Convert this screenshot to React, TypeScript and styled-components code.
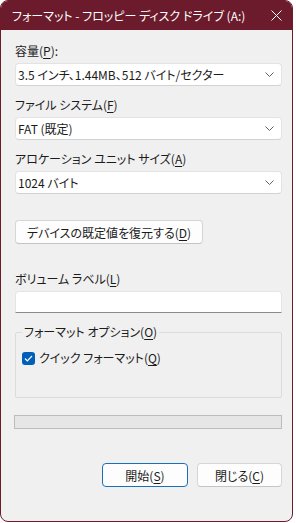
import React from 'react';
import styled, { createGlobalStyle } from 'styled-components';

const GlobalStyle = createGlobalStyle`
  html, body {
    margin: 0;
    background: #ffffff;
  }
  body {
    font-family: "Noto Sans CJK JP", "Noto Sans", sans-serif;
    font-feature-settings: "palt";
    font-size: 12px;
    color: #1b1b1b;
  }
`;

const maroon = '#6b1b2b';

const Window = styled.div`
  width: 293px;
  height: 522px;
  box-sizing: border-box;
  border: 1px solid ${maroon};
  border-radius: 8px;
  overflow: hidden;
  background: #f0f0f0;
  display: flex;
  flex-direction: column;
`;

const TitleBar = styled.div`
  height: 29px;
  flex-shrink: 0;
  background: ${maroon};
  color: #ffffff;
  display: flex;
  align-items: center;
  padding-left: 11px;
  font-size: 12px;
`;

const CloseButton = styled.div`
  margin-left: auto;
  width: 46px;
  height: 29px;
  display: flex;
  align-items: center;
  justify-content: center;
  margin-right: -7px;
`;

const Content = styled.div`
  padding: 13px 10px 0 14px;
  display: flex;
  flex-direction: column;
`;

const Field = styled.div<{ $top?: number }>`
  display: flex;
  flex-direction: column;
  gap: 4px;
  margin-top: ${({ $top }) => $top ?? 0}px;
`;

const Label = styled.div`
  line-height: 16px;
`;

const Key = styled.span`
  text-decoration: underline;
  text-underline-offset: 2px;
`;

const Combo = styled.div`
  height: 23px;
  box-sizing: border-box;
  background: #ffffff;
  border: 1px solid #e3e3e3;
  border-bottom-color: #d2d2d2;
  border-radius: 4px;
  display: flex;
  align-items: center;
  justify-content: space-between;
  padding: 0 7px 0 2px;
`;

const Button = styled.button<{ $width: number; $primary?: boolean }>`
  width: ${({ $width }) => $width}px;
  height: 24px;
  box-sizing: border-box;
  background: #fdfdfd;
  border: 1px solid ${({ $primary }) => ($primary ? '#1a6fbd' : '#d6d6d6')};
  border-bottom-color: ${({ $primary }) => ($primary ? '#1a6fbd' : '#c4c4c4')};
  border-radius: 4px;
  font: inherit;
  color: #1b1b1b;
  padding: 0;
  display: flex;
  align-items: center;
  justify-content: center;
`;

const RestoreRow = styled.div`
  margin-top: 26px;
  display: flex;
`;

const TextInput = styled.div`
  height: 22px;
  box-sizing: border-box;
  background: #ffffff;
  border: 1px solid #e5e5e5;
  border-bottom: 1px solid #8a8a8a;
  border-radius: 4px 4px 0 0;
`;

const Group = styled.fieldset`
  margin: 11px 0 0;
  min-width: 0;
  border: 1px solid #dcdcdc;
  border-radius: 2px;
  padding: 0 0 31px 6px;
`;

const Legend = styled.legend`
  padding: 0 2px;
  line-height: 16px;
`;

const CheckRow = styled.div`
  margin-top: 10px;
  display: flex;
  align-items: center;
  gap: 4px;
  line-height: 16px;
`;

const CheckBox = styled.div`
  width: 13px;
  height: 13px;
  border-radius: 3px;
  background: #005fb8;
  display: flex;
  align-items: center;
  justify-content: center;
`;

const Progress = styled.div`
  margin: 17px 0 0 -1px;
  height: 14px;
  box-sizing: border-box;
  background: #e6e6e6;
  border: 1px solid #bcbcbc;
`;

const ButtonRow = styled.div`
  margin-top: 34px;
  display: flex;
  justify-content: flex-end;
  gap: 9px;
`;

const Chevron = () => (
  <svg width="9" height="5" viewBox="0 0 9 5">
    <path d="M0.5 0.5 L4.5 4.5 L8.5 0.5" fill="none" stroke="#606060" strokeWidth="1" />
  </svg>
);

const CloseIcon = () => (
  <svg width="11" height="11" viewBox="0 0 11 11">
    <path d="M0.5 0.5 L10.5 10.5 M10.5 0.5 L0.5 10.5" stroke="#ffffff" strokeWidth="1" />
  </svg>
);

const CheckMark = () => (
  <svg width="9" height="7" viewBox="0 0 9 7">
    <path d="M1 3.5 L3.3 5.8 L8 1" fill="none" stroke="#ffffff" strokeWidth="1.2" />
  </svg>
);

const ComboField = ({ label, value, top }: { label: React.ReactNode; value: string; top?: number }) => (
  <Field $top={top}>
    <Label>{label}</Label>
    <Combo>
      <span>{value}</span>
      <Chevron />
    </Combo>
  </Field>
);

const App = () => (
  <>
    <GlobalStyle />
    <Window>
      <TitleBar>
        フォーマット - フロッピー ディスク ドライブ (A:)
        <CloseButton>
          <CloseIcon />
        </CloseButton>
      </TitleBar>
      <Content>
        <ComboField
          label={<>容量(<Key>P</Key>):</>}
          value="3.5 インチ、1.44MB、512 バイト/セクター"
        />
        <ComboField
          top={11}
          label={<>ファイル システム(<Key>F</Key>)</>}
          value="FAT (既定)"
        />
        <ComboField
          top={11}
          label={<>アロケーション ユニット サイズ(<Key>A</Key>)</>}
          value="1024 バイト"
        />
        <RestoreRow>
          <Button $width={188}>
            デバイスの既定値を復元する(<Key>D</Key>)
          </Button>
        </RestoreRow>
        <Field $top={27}>
          <Label>
            ボリューム ラベル(<Key>L</Key>)
          </Label>
          <TextInput />
        </Field>
        <Group>
          <Legend>
            フォーマット オプション(<Key>O</Key>)
          </Legend>
          <CheckRow>
            <CheckBox>
              <CheckMark />
            </CheckBox>
            <span>
              クイック フォーマット(<Key>Q</Key>)
            </span>
          </CheckRow>
        </Group>
        <Progress />
        <ButtonRow>
          <Button $width={86} $primary>
            開始(<Key>S</Key>)
          </Button>
          <Button $width={85}>
            閉じる(<Key>C</Key>)
          </Button>
        </ButtonRow>
      </Content>
    </Window>
  </>
);

export default App;
